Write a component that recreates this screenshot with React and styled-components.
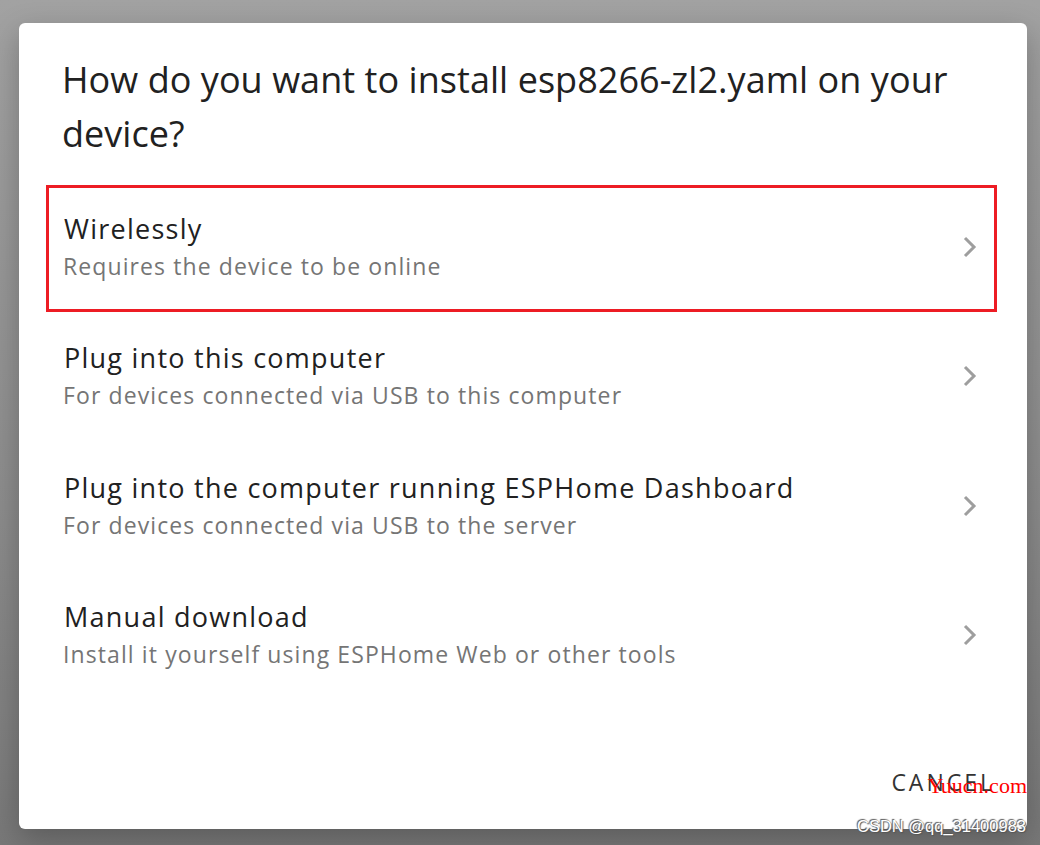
import React from "react";
import styled, { createGlobalStyle } from "styled-components";

const Global = createGlobalStyle`
  html, body { margin: 0; padding: 0; }
  body {
    width: 1040px; height: 845px; overflow: hidden;
    font-family: "Open Sans", "Noto Sans", sans-serif;
    background: linear-gradient(180deg, #a2a2a2 0%, #8c8c8c 60%, #787878 100%);
  }
`;

const Page = styled.div`
  position: relative;
  width: 1040px;
  height: 845px;
  box-sizing: border-box;
  padding: 23px 13px 16px 19px;
`;

const Dialog = styled.div`
  position: relative;
  width: 1008px;
  height: 806px;
  background: #fff;
  border-radius: 6px;
  box-sizing: border-box;
  display: flex;
  flex-direction: column;
  box-shadow: 0 10px 30px rgba(0,0,0,0.25);
`;

const Title = styled.h2`
  margin: 0;
  padding: 30px 40px 0 43px;
  font-size: 36px;
  font-weight: 400;
  line-height: 54px;
  color: #212121;
  letter-spacing: 0.05px;
`;

const List = styled.div`
  display: flex;
  flex-direction: column;
  margin-top: 21px;
`;

const Item = styled.div`
  position: relative;
  height: 129.5px;
  display: flex;
  align-items: center;
  padding: 0 49px 0 44px;
  box-sizing: border-box;
`;

const Texts = styled.div`
  flex: 1;
  display: flex;
  flex-direction: column;
`;

const ItemTitle = styled.div`
  font-size: 27px;
  letter-spacing: 1.25px;
  line-height: 38px;
  color: #212121;
  padding-left: 1px;
`;

const ItemSub = styled.div`
  font-size: 23px;
  letter-spacing: 1.1px;
  line-height: 36px;
  color: #757575;
`;

const Highlight = styled.div`
  position: absolute;
  left: 27px;
  right: 30px;
  top: 3px;
  bottom: 0px;
  border: 3px solid #ed1c24;
  pointer-events: none;
`;

const Chevron = styled.svg`
  width: 16px;
  height: 22px;
  flex: none;
`;

const Actions = styled.div`
  margin-top: auto;
  display: flex;
  justify-content: flex-end;
  padding: 0 32px 32px 0;
`;

const CancelButton = styled.button`
  background: none;
  border: none;
  padding: 0;
  font-family: "Open Sans", "Noto Sans", sans-serif;
  font-size: 23px;
  letter-spacing: 3px;
  color: #333;
  line-height: 30px;
  cursor: pointer;
`;

const Watermark = styled.div`
  position: absolute;
  right: 0;
  bottom: 30px;
  font-family: "Liberation Serif", serif;
  font-size: 22px;
  color: #ff0000;
`;

const Credit = styled.div`
  position: absolute;
  right: 14px;
  bottom: 9px;
  font-family: "Liberation Sans", Arial, sans-serif;
  font-size: 16.5px;
  color: #fff;
  text-shadow: 1px 1px 1px #555, -1px -1px 1px #555;
`;

const items = [
  { title: "Wirelessly", sub: "Requires the device to be online", hl: true },
  { title: "Plug into this computer", sub: "For devices connected via USB to this computer" },
  { title: "Plug into the computer running ESPHome Dashboard", sub: "For devices connected via USB to the server" },
  { title: "Manual download", sub: "Install it yourself using ESPHome Web or other tools" },
];

export default function App() {
  return (
    <>
      <Global />
      <Page>
        <Dialog>
          <Title>How do you want to install esp8266-zl2.yaml on your device?</Title>
          <List>
            {items.map((it) => (
              <Item key={it.title}>
                <Texts>
                  <ItemTitle>{it.title}</ItemTitle>
                  <ItemSub>{it.sub}</ItemSub>
                </Texts>
                <Chevron viewBox="0 0 16 22">
                  <path d="M3 2 L12 11 L3 20" fill="none" stroke="#9e9e9e" strokeWidth="3" />
                </Chevron>
                {it.hl && <Highlight />}
              </Item>
            ))}
          </List>
          <Actions>
            <CancelButton>CANCEL</CancelButton>
          </Actions>
          <Watermark>Yuucn.com</Watermark>
        </Dialog>
        <Credit>CSDN @qq_31400983</Credit>
      </Page>
    </>
  );
}
